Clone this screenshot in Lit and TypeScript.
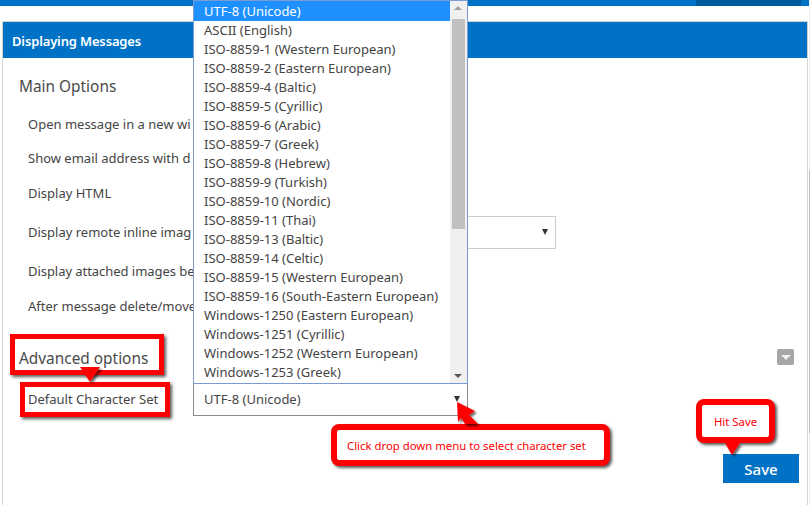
import { LitElement, html, css, svg } from "lit";
import { customElement } from "lit/decorators.js";

const CHARSETS = [
  "UTF-8 (Unicode)", "ASCII (English)", "ISO-8859-1 (Western European)", "ISO-8859-2 (Eastern European)",
  "ISO-8859-4 (Baltic)", "ISO-8859-5 (Cyrillic)", "ISO-8859-6 (Arabic)", "ISO-8859-7 (Greek)",
  "ISO-8859-8 (Hebrew)", "ISO-8859-9 (Turkish)", "ISO-8859-10 (Nordic)", "ISO-8859-11 (Thai)",
  "ISO-8859-13 (Baltic)", "ISO-8859-14 (Celtic)", "ISO-8859-15 (Western European)",
  "ISO-8859-16 (South-Eastern European)", "Windows-1250 (Eastern European)", "Windows-1251 (Cyrillic)",
  "Windows-1252 (Western European)", "Windows-1253 (Greek)",
];

@customElement("app-root")
export class AppRoot extends LitElement {
  static styles = css`
    :host { display: block; width: 810px; height: 505px; position: relative; overflow: hidden; background: #fff;
      font-family: "Noto Sans", sans-serif; font-size: 13px; color: #444; }
    .top { height: 6px; background: #0072c6; display: flex; justify-content: flex-end; padding-right: 9px; }
    .top i { display: block; width: 105px; background: #005a9e; }
    .panel { margin: 15px 2px 0 2px; height: 484px; border: 1px solid #d4d4d4; border-bottom: 0; box-sizing: border-box; }
    .head { height: 36px; background: #0072c6; color: #fff; font-weight: 600; font-size: 13px; letter-spacing: -0.15px; line-height: 38px; padding-left: 9px; }
    .body { padding: 0 0 0 16px; display: flex; flex-direction: column; position: relative; }
    h3 { margin: 0; font-weight: 400; font-size: 15.4px; line-height: 22px; color: #4a4a4a; }
    .main { margin-top: 18px; }
    .row { margin-left: 9px; line-height: 18px; white-space: nowrap; width: 165px; overflow: hidden; }
    .r1 { margin-top: 17px; } .r2 { margin-top: 16px; } .r3 { margin-top: 17px; }
    .r4 { margin-top: 21px; } .r5 { margin-top: 21px; letter-spacing: -0.05px; } .r6 { margin-top: 17px; }
    .adv { margin-top: 33px; display: flex; justify-content: space-between; align-items: center; padding-right: 13px; }
    .collapse { width: 17px; height: 16px; margin-bottom: 4px; border-radius: 2px; background: #a6a6a6; display: flex; align-items: center; justify-content: center; }
    .collapse::after { content: ""; border: 5px solid transparent; border-top: 5px solid #eee; border-bottom: 0; }
    .r7 { margin-top: 20px; }
    .save { align-self: flex-end; margin: 46px 8px 0 0; width: 76px; height: 29px; background: #0072c6; color: #fff; font-size: 15px;
      border: 0; padding: 0; font-family: inherit; font-weight: 500; }
    .sel { position: absolute; box-sizing: border-box; background: #fff; }
    .remote { left: 462px; top: 216px; width: 94px; height: 33px; border: 1px solid #ccc; position: absolute; box-sizing: border-box; background: #fff; }
    .caret { position: absolute; width: 0; height: 0; border-left: 3.5px solid transparent; border-right: 3.5px solid transparent; border-top: 6px solid #333; }
    .remote .caret { left: 79px; top: 12px; }
    .current { left: 193px; top: 383px; width: 275px; height: 33px; border: 1px solid #8c8c8c; border-top: 0; line-height: 32px; padding-left: 10px; }
    .current .caret { left: 260px; top: 13px; }
    .list { position: absolute; left: 193px; top: 0; width: 275px; height: 384px; box-sizing: border-box;
      border: 1px solid #7b9bd3; background: #fff; overflow: hidden; }
    .opt { height: 19px; line-height: 19px; padding-left: 10px; white-space: nowrap; }
    .opt.on { background: #1e90ff; color: #fff; height: 20px; line-height: 20px; }
    .sb { position: absolute; right: 0; top: 0; bottom: 0; width: 17px; background: #f0f0f0; }
    .thumb { position: absolute; left: 2px; top: 18px; width: 13px; height: 210px; background: #c0c0c0; }
    .up, .dn { position: absolute; left: 4px; width: 0; height: 0; border: 4px solid transparent; }
    .up { top: 5px; border-top: 0; border-bottom: 4px solid #a0a0a0; }
    .dn { bottom: 5px; border-bottom: 0; border-top: 4px solid #555; }
    .page-sb { position: absolute; right: 0; top: 0; bottom: 0; width: 1px; background: #f0f0f0; }
    .page-sb i { position: absolute; left: 0; top: 170px; width: 1px; height: 263px; background: #c0c0c0; }
    .box { position: absolute; box-sizing: border-box; border: 5px solid #f00; box-shadow: 2px 2px 3px rgba(0,0,0,.65); }
    .adv-box { left: 10px; top: 334px; width: 154px; height: 41px; }
    .def-box { left: 20px; top: 382px; width: 150px; height: 35px; }
    .note { position: absolute; box-sizing: border-box; border: 6px solid #f00; border-radius: 8px; background: #fff; color: #f00;
      box-shadow: 2px 2px 3px rgba(0,0,0,.65); font-size: 11.35px; display: flex; align-items: center; white-space: nowrap; }
    .n1 { left: 331px; top: 424px; width: 279px; height: 42px; padding-left: 10px; }
    .n2 { left: 696px; top: 399px; width: 79px; height: 44px; justify-content: center; }
    .ov { position: absolute; left: 0; top: 0; pointer-events: none; }
  `;

  render() {
    return html`
      <div class="top"><i></i></div>
      <div class="panel">
        <div class="head">Displaying Messages</div>
        <div class="body">
          <h3 class="main">Main Options</h3>
          <div class="row r1">Open message in a new wi</div>
          <div class="row r2">Show email address with d</div>
          <div class="row r3">Display HTML</div>
          <div class="row r4">Display remote inline imag</div>
          <div class="row r5">Display attached images be</div>
          <div class="row r6">After message delete/move</div>
          <div class="adv"><h3>Advanced options</h3><span class="collapse"></span></div>
          <div class="row r7">Default Character Set</div>
          <button class="save">Save</button>
        </div>
      </div>
      <div class="page-sb"><i></i></div>
      <div class="remote"><span class="caret"></span></div>
      <div class="sel current">UTF-8 (Unicode)<span class="caret"></span></div>
      <div class="list">
        ${CHARSETS.map((c, i) => html`<div class="opt ${i === 0 ? "on" : ""}">${c}</div>`)}
        <div class="sb"><span class="up"></span><span class="thumb"></span><span class="dn"></span></div>
      </div>
      <div class="box adv-box"></div>
      <div class="box def-box"></div>
      <div class="note n1">Click drop down menu to select character set</div>
      <div class="note n2">Hit Save</div>
      <svg class="ov" width="810" height="505" viewBox="0 0 810 505">
        ${svg`
          <defs><filter id="s" x="-30%" y="-30%" width="170%" height="170%"><feDropShadow dx="2" dy="2" stdDeviation="1.2" flood-color="#000" flood-opacity=".6"/></filter></defs>
          <path d="M80 367 L100 367 L90 382 Z" fill="#f00" filter="url(#s)"/>
          <path d="M457 402 L475 411 L469 415 L478 424 L465 424 L461 418 L458 422 Z" fill="#f00" filter="url(#s)"/>
          <path d="M725 443 L740 443 L732 455 Z" fill="#f00" filter="url(#s)"/>
        `}
      </svg>
    `;
  }
}
